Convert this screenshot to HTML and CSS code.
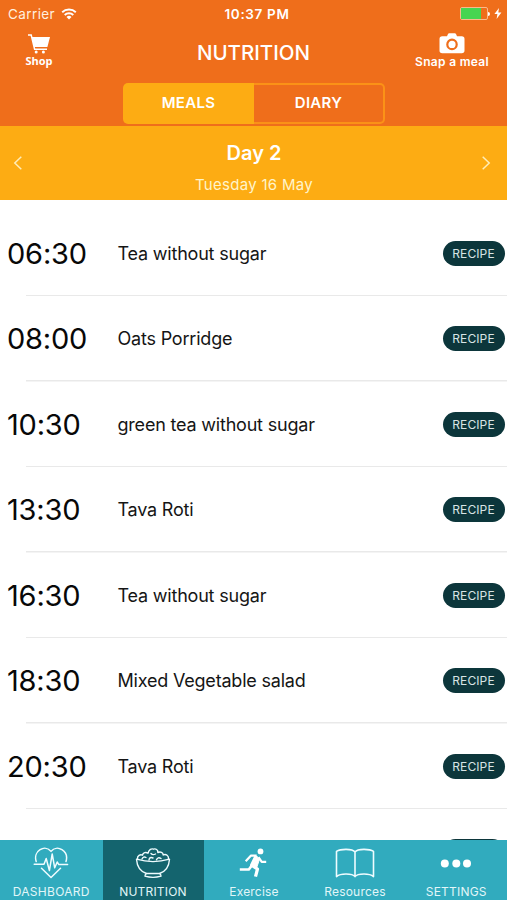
FILE: index.html
```html
<!DOCTYPE html>
<html lang="en">
<head>
<meta charset="utf-8">
<title>Nutrition</title>
<link rel="stylesheet" href="styles.css">
</head>
<body>
<div class="app">
  <header class="header">
    <div class="status">
      <div class="status-left"><span class="carrier">Carrier</span>
        <svg class="wifi" width="16" height="12" viewBox="0 0 16 12" fill="none" stroke="#fff" stroke-width="1.9"><path d="M1.2 4.3a9.8 9.8 0 0 1 13.6 0M3.7 7a6.2 6.2 0 0 1 8.6 0"/><path d="M8 11.6L5.5 9a3.6 3.6 0 0 1 5 0z" fill="#fff" stroke="none"/></svg>
      </div>
      <span class="clock">10:37 PM</span>
      <div class="status-right">
        <span class="battery"><span class="charge"></span></span><span class="battery-tip"></span>
        <svg class="bolt" width="8" height="11" viewBox="0 0 8 11" fill="#fff"><path d="M5 0L0.4 6H3.4L2.6 11L7.4 4.6H4.3z"/></svg>
      </div>
    </div>
    <div class="navbar">
      <div class="action shop">
        <svg width="23" height="20" viewBox="0 0 23 20" fill="none" stroke="#fff"><path d="M0 1H3.2L6.6 15.2H19" stroke-width="1.5"/><path d="M3.7 3H22L19.4 13H6.2z" fill="#fff" stroke="none"/><circle cx="8.2" cy="18" r="1.5" fill="#fff" stroke="none"/><circle cx="15.4" cy="18" r="1.5" fill="#fff" stroke="none"/></svg>
        <span class="shop-label">Shop</span>
      </div>
      <h1 class="title">NUTRITION</h1>
      <div class="action snap">
        <svg width="26" height="21" viewBox="0 0 26 21"><path d="M8 3.2L9 1Q9.4 .3 10.2 .3H15.8Q16.6 .3 17 1L18 3.2H22.8Q25.5 3.2 25.5 6V17.6Q25.5 20.3 22.8 20.3H3.2Q.5 20.3 .5 17.6V6Q.5 3.2 3.2 3.2z" fill="#fff"/><circle cx="13" cy="11.4" r="4.7" fill="#fff" stroke="#ef6e1b" stroke-width="2.2"/></svg>
        <span class="snap-label">Snap a meal</span>
      </div>
    </div>
    <div class="segments"><div class="segment selected">MEALS</div><div class="segment other">DIARY</div></div>
  </header>
  <section class="day">
    <svg width="10" height="16" viewBox="0 0 10 16" fill="none" stroke="#ffedb8" stroke-width="1.5"><path d="M8.3 1.8L1.8 8L8.3 14.2"/></svg>
    <div class="day-text"><div class="day-name">Day 2</div><div class="date">Tuesday 16 May</div></div>
    <svg class="next" width="10" height="16" viewBox="0 0 10 16" fill="none" stroke="#ffedb8" stroke-width="1.5"><path d="M1.7 1.8L8.2 8L1.7 14.2"/></svg>
  </section>
  <main class="meals">
    <div class="meal"><span class="time">06:30</span><span class="name">Tea without sugar</span><span class="recipe">RECIPE</span></div>
    <div class="meal"><span class="time">08:00</span><span class="name">Oats Porridge</span><span class="recipe">RECIPE</span></div>
    <div class="meal"><span class="time">10:30</span><span class="name">green tea without sugar</span><span class="recipe">RECIPE</span></div>
    <div class="meal"><span class="time">13:30</span><span class="name">Tava Roti</span><span class="recipe">RECIPE</span></div>
    <div class="meal"><span class="time">16:30</span><span class="name">Tea without sugar</span><span class="recipe">RECIPE</span></div>
    <div class="meal"><span class="time">18:30</span><span class="name">Mixed Vegetable salad</span><span class="recipe">RECIPE</span></div>
    <div class="meal"><span class="time">20:30</span><span class="name">Tava Roti</span><span class="recipe">RECIPE</span></div>
    <div class="meal"><span class="time"></span><span class="name"></span><span class="recipe"></span></div>
  </main>
  <nav class="tabs">
    <div class="tab">
      <svg width="36" height="34" viewBox="0 0 36 34" fill="none" stroke="#effcff" stroke-width="1.5" stroke-linejoin="round" stroke-linecap="round"><path d="M3.2 14.5C-.2 4 12-3 18 4.4C24-3 36.2 4 33 14.5M8.5 21.2L18 30.5L27.5 21.2"/><path d="M1.2 17.2H11L13.2 11.5L16.4 23.5L19.2 7L21.7 20.8L24.2 15L25.8 17.6H34.6"/></svg>
      <span>DASHBOARD</span>
    </div>
    <div class="tab active">
      <svg width="36" height="34" viewBox="0 0 36 34" fill="none" stroke="#effcff" stroke-width="1.4" stroke-linejoin="round" stroke-linecap="round"><path d="M1.5 12.2Q18 17 34.5 12.2C34 19.5 30.5 24.5 24.5 26.5H11.5C5.5 24.5 2 19.5 1.5 12.2z"/><path d="M11.5 26.5Q9.8 27.5 10 29.2Q18 31.5 26 29.2Q26.2 27.5 24.5 26.5"/><path d="M2.5 12C2 8.5 5.5 7.2 7.5 8.2C8 5.5 11 4.8 13 6.2C14 2.5 16.5 1.2 18.5 2.2C20.5 1.2 23.3 2.8 22.8 5.5C25.5 4.2 28.2 5.5 28.2 8C31 6.5 34 8.8 33.5 12M7 12Q8.5 9 11 10.5M14 13Q14.5 9.5 18 11M16 6.5Q17.8 8.5 20.5 7M21.5 12.8Q23 9.5 26 11.5"/></svg>
      <span class="tight">NUTRITION</span>
    </div>
    <div class="tab">
      <svg width="36" height="34" viewBox="-2 0 36 34" fill="none" stroke="#fff" stroke-linejoin="round"><circle cx="22.5" cy="4.4" r="2.9" fill="#fff" stroke="none"/><path d="M18.2 8.7L13.6 18.2L19.5 22L17.5 29.7" stroke-width="3.2"/><path d="M18.7 9.2L15 18.4L18.8 20.2L21.5 12.2z" fill="#fff" stroke-width="1"/><path d="M18.7 8.7H12.8L7.7 14.2M20.5 10.2L23.7 14.8H28.2" stroke-width="2.2"/><path d="M14.2 18L10.8 22.5H1.8" stroke-width="2.7"/></svg>
      <span class="tight">Exercise</span>
    </div>
    <div class="tab">
      <svg width="40" height="34" viewBox="0 0 40 34" fill="none" stroke="#effcff" stroke-width="1.6" stroke-linejoin="round"><path d="M20 5Q18 2.4 11 2.4Q4.5 2.4 1.5 4.4V29.6Q4.5 27 11 27Q18 27 20 29.6Q22 27 29 27Q35.5 27 38.5 29.6V4.4Q35.5 2.4 29 2.4Q22 2.4 20 5zV29.6"/></svg>
      <span class="tight">Resources</span>
    </div>
    <div class="tab">
      <svg width="36" height="34" viewBox="0 0 36 34" fill="#fff"><circle cx="6.8" cy="16.5" r="4"/><circle cx="18.3" cy="16.5" r="4"/><circle cx="29" cy="16.5" r="4"/></svg>
      <span class="tight">SETTINGS</span>
    </div>
  </nav>
</div>
</body>
</html>
```

FILE: styles.css
```css
* { box-sizing: border-box; }
body { margin: 0; font-family: Inter, "Liberation Sans", sans-serif; background: #fff; }
svg { display: block; flex: none; }
.app { width: 507px; height: 900px; display: flex; flex-direction: column; overflow: hidden; }
.header { height: 126px; flex: none; background: #ef6e1b; color: #fff; }
.status { height: 27px; display: grid; grid-template-columns: 1fr auto 1fr; align-items: center; padding: 0 5px 0 8px; font-size: 13.5px; }
.status-left { display: flex; align-items: center; gap: 6px; }
.carrier { color: #fff0df; letter-spacing: .4px; }
.clock { font-weight: 600; letter-spacing: .65px; padding-left: 4px; }
.status-right { display: flex; align-items: center; justify-content: flex-end; }
.battery { width: 28px; height: 13px; border: 1px solid #f9b98d; border-radius: 2px; padding: 0; }
.charge { display: block; width: 20px; height: 11px; background: #46d551; }
.battery-tip { width: 2px; height: 4px; background: #fff; border-radius: 0 2px 2px 0; margin-right: 4px; }
.navbar { height: 55.5px; display: grid; grid-template-columns: 110px 1fr 110px; }
.action { display: flex; flex-direction: column; align-items: center; font-weight: 600; line-height: 14px; }
.shop { width: 78px; padding-top: 7px; }
.shop-label { font-family: "Open Sans", sans-serif; font-size: 11px; font-weight: 700; }
.snap { padding-top: 6px; }
.snap-label { font-size: 12px; letter-spacing: .3px; padding-top: 1px; }
.title { margin: 0; text-align: center; font-size: 20.5px; font-weight: 500; line-height: 51px; }
.segments { width: 262px; height: 41px; margin-left: 123px; display: grid; grid-template-columns: 1fr 1fr; }
.segment { text-align: center; line-height: 40px; font-size: 15px; font-weight: 600; letter-spacing: .3px; }
.selected { background: #fdac13; border-radius: 5px 0 0 5px; }
.other { border: 2px solid #fb9217; border-left: 0; border-radius: 0 5px 5px 0; line-height: 36px; }
.day { height: 74px; flex: none; background: #fdac13; display: flex; align-items: center; justify-content: space-between; padding: 0 16px 0 13px; }
.day-text { text-align: center; padding: 12px 0 0 4px; color: #fff; }
.day-name { font-size: 20px; font-weight: 600; line-height: 32px; }
.date { font-size: 15px; line-height: 32px; letter-spacing: .3px; color: #fff4ca; }
.meals { flex: 1; min-height: 0; overflow: hidden; padding-top: 10.5px; }
.meal { height: 85.5px; display: grid; grid-template-columns: 110.5px 1fr 62px; align-items: center; padding: 0 2px 0 7px; background: linear-gradient(#e9e9e9, #e9e9e9) no-repeat 26px 100% / 100% 1.5px; }
.time { font-size: 29px; color: #080808; letter-spacing: -.2px; }
.name { font-size: 18px; color: #151515; letter-spacing: -.2px; }
.recipe { height: 25px; border-radius: 13px; background: #0c363b; color: #d8e4e5; text-align: center; font-size: 12px; letter-spacing: .1px; padding-right: 1px; line-height: 25px; }
.tabs { height: 60px; flex: none; display: grid; grid-template-columns: 102.5px 101px 101px 101px 101.5px; background: #31abbe; }
.tab { display: flex; flex-direction: column; align-items: center; padding-top: 7px; color: #e2f6f8; font-size: 12px; line-height: 16px; gap: 3px; }
.tab span { letter-spacing: .3px; white-space: nowrap; }
.tab .tight { letter-spacing: .2px; }
.active { background: #14646e; }
```
